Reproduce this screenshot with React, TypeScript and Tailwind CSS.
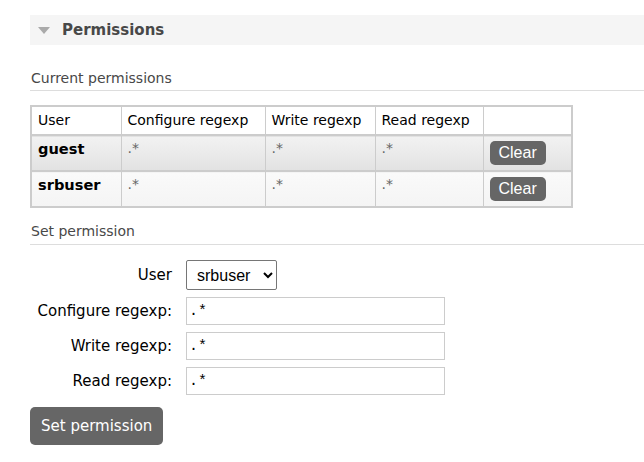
export default function App() {
  const rows = [
    { user: 'guest', c: '.*', w: '.*', r: '.*', bg: 'bg-gradient-to-b from-[#f2f2f2] to-[#e2e2e2]' },
    { user: 'srbuser', c: '.*', w: '.*', r: '.*', bg: 'bg-gradient-to-b from-[#fafafa] to-[#f4f4f4]' },
  ];

  const inputCls = 'h-[28px] w-[259px] border border-[#cccccc] px-[2px] text-[15px] text-black';

  return (
    <div className="min-h-screen bg-white pl-[30px] pt-[15px] text-[14px] text-[#484848]" style={{ fontFamily: '"DejaVu Sans", Verdana, sans-serif' }}>
      {/* section header */}
      <div className="flex h-[30px] items-center bg-[#f5f5f5] pl-[8px]">
        <svg width="12" height="8" viewBox="0 0 12 8" className="mr-[12px] mt-[1px]">
          <polygon points="0,0 12,0 6,7" fill="#aaaaaa" />
        </svg>
        <span className="mt-[1px] text-[15px] font-bold text-[#484848]">Permissions</span>
      </div>

      <h3 className="mt-[23px] border-b border-[#dddddd] pb-[1px] pl-[1px] text-[14px] font-normal text-[#484848]">Current permissions</h3>

      <table className="mt-[14px] border-collapse border-2 border-[#cccccc] text-[14px] text-black">
        <thead>
          <tr className="h-[29px]">
            <th className="w-[90px] border border-[#cccccc] px-[6px] text-left font-normal">User</th>
            <th className="w-[144px] border border-[#cccccc] px-[6px] text-left font-normal">Configure regexp</th>
            <th className="w-[110px] border border-[#cccccc] px-[6px] text-left font-normal">Write regexp</th>
            <th className="w-[108px] border border-[#cccccc] px-[6px] text-left font-normal">Read regexp</th>
            <th className="w-[89px] border border-[#cccccc] px-[6px]"></th>
          </tr>
        </thead>
        <tbody>
          {rows.map((row) => (
            <tr key={row.user} className={`h-[36px] border-t-2 border-[#cccccc] ${row.bg}`}>
              <td className="border border-[#cccccc] px-[6px] pt-[2px] align-top text-[14.6px] font-bold">{row.user}</td>
              <td className="border border-[#cccccc] px-[6px] pt-[2px] align-top text-[#666666]">{row.c}</td>
              <td className="border border-[#cccccc] px-[6px] pt-[2px] align-top text-[#666666]">{row.w}</td>
              <td className="border border-[#cccccc] px-[6px] pt-[2px] align-top text-[#666666]">{row.r}</td>
              <td className="border border-[#cccccc] px-[6px] align-middle">
                <button className="h-[24px] rounded-[5px] bg-[#666666] px-[9px] text-[16px] leading-none text-white" style={{ fontFamily: '"Liberation Sans", Arial, sans-serif' }}>Clear</button>
              </td>
            </tr>
          ))}
        </tbody>
      </table>

      <h3 className="mt-[13px] border-b border-[#dddddd] pb-[2px] pl-[1px] text-[14px] font-normal text-[#484848]">Set permission</h3>

      <div className="mt-[15px] grid grid-cols-[142px_1fr] items-center gap-x-[14px] gap-y-[7px] text-[15px] text-black">
        <label className="text-right">User</label>
        <div>
          <select className="h-[30px] w-[91px] rounded-[2px] border border-[#767676] bg-white px-[6px] text-[16px] text-black" style={{ fontFamily: '"Liberation Sans", Arial, sans-serif' }} defaultValue="srbuser">
            <option>guest</option>
            <option>srbuser</option>
          </select>
        </div>
        <label className="text-right">Configure regexp:</label>
        <input className={inputCls} style={{ fontFamily: '"Liberation Mono", monospace' }} defaultValue=".*" />
        <label className="text-right">Write regexp:</label>
        <input className={inputCls} style={{ fontFamily: '"Liberation Mono", monospace' }} defaultValue=".*" />
        <label className="text-right">Read regexp:</label>
        <input className={inputCls} style={{ fontFamily: '"Liberation Mono", monospace' }} defaultValue=".*" />
      </div>

      <button className="mt-[12px] h-[38px] rounded-[5px] bg-[#666666] px-[11px] text-[15px] text-white">Set permission</button>
    </div>
  );
}
